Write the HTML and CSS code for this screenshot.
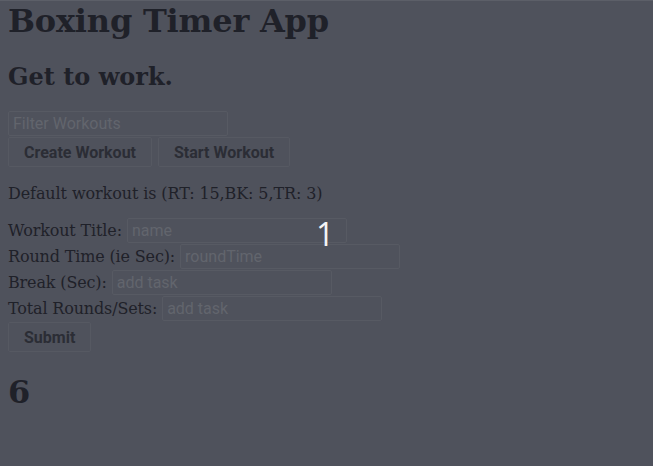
FILE: index.html
```html
<!DOCTYPE html>
<html>
<head>
<meta charset="utf-8">
<link rel="stylesheet" href="styles.css">
</head>
<body>
<div class="app">
  <h1 class="title">Boxing Timer App</h1>
  <h2 class="subtitle">Get to work.</h2>
  <div class="controls">
    <input class="field filter" placeholder="Filter Workouts">
    <div class="btn-row">
      <button class="btn">Create Workout</button>
      <button class="btn">Start Workout</button>
    </div>
  </div>
  <p class="default">Default workout is (RT: 15,BK: 5,TR: 3)</p>
  <form class="form">
    <div class="row"><label>Workout Title:</label><input class="field" placeholder="name"></div>
    <div class="row"><label>Round Time (ie Sec):</label><input class="field" placeholder="roundTime"></div>
    <div class="row"><label>Break (Sec):</label><input class="field" placeholder="add task"></div>
    <div class="row"><label>Total Rounds/Sets:</label><input class="field" placeholder="add task"></div>
    <div class="row"><button class="btn" type="button">Submit</button></div>
  </form>
  <h1 class="count">6</h1>
</div>
<div class="overlay"><span class="timer">1</span></div>
</body>
</html>
```
FILE: styles.css
```css
html, body { margin: 0; padding: 0; }
body {
  background: #4f525c;
  color: #1f2129;
  font-family: "DejaVu Serif", serif;
  font-size: 16px;
  border-top: 1px solid #5c5f68;
}
.app { padding: 0 7px 0 8px; }
.title { font-size: 32px; margin: 0 0 20px; line-height: 41px; letter-spacing: -0.2px; }
.subtitle { font-size: 24px; margin: 0 0 19px; line-height: 30px; }
.controls { display: flex; flex-direction: column; align-items: flex-start; gap: 1px; }
.field {
  font-family: Roboto, sans-serif;
  font-size: 16px;
  background: transparent;
  border: 1px solid #575a63;
  border-radius: 2px;
  color: #1f2129;
  padding: 2px 4px;
  width: 220px;
  height: 25px;
  box-sizing: border-box;
  margin: 0;
}
.field::placeholder { color: #62656d; }
.btn-row { display: flex; gap: 6px; }
.btn {
  font-family: Roboto, sans-serif;
  font-weight: bold;
  font-size: 16px;
  color: #2b2d35;
  background: transparent;
  border: 1px solid #565962;
  border-radius: 2px;
  padding: 0 15px;
  height: 30px;
  margin: 0;
}
.default { margin: 17px 0 14px; line-height: 20px; letter-spacing: -0.1px; }
.form { display: flex; flex-direction: column; align-items: flex-start; gap: 1px; }
.row { display: flex; align-items: center; gap: 5px; line-height: 25px; }
.row label { letter-spacing: -0.15px; }
.count { font-size: 32px; margin: 20px 0 0; line-height: 40px; }
.overlay { position: absolute; left: 0; top: 0; }
.timer {
  position: absolute; left: 316px; top: 212px;
  font-family: "Open Sans", sans-serif; font-size: 32px; color: #f4f4f6;
}
```
